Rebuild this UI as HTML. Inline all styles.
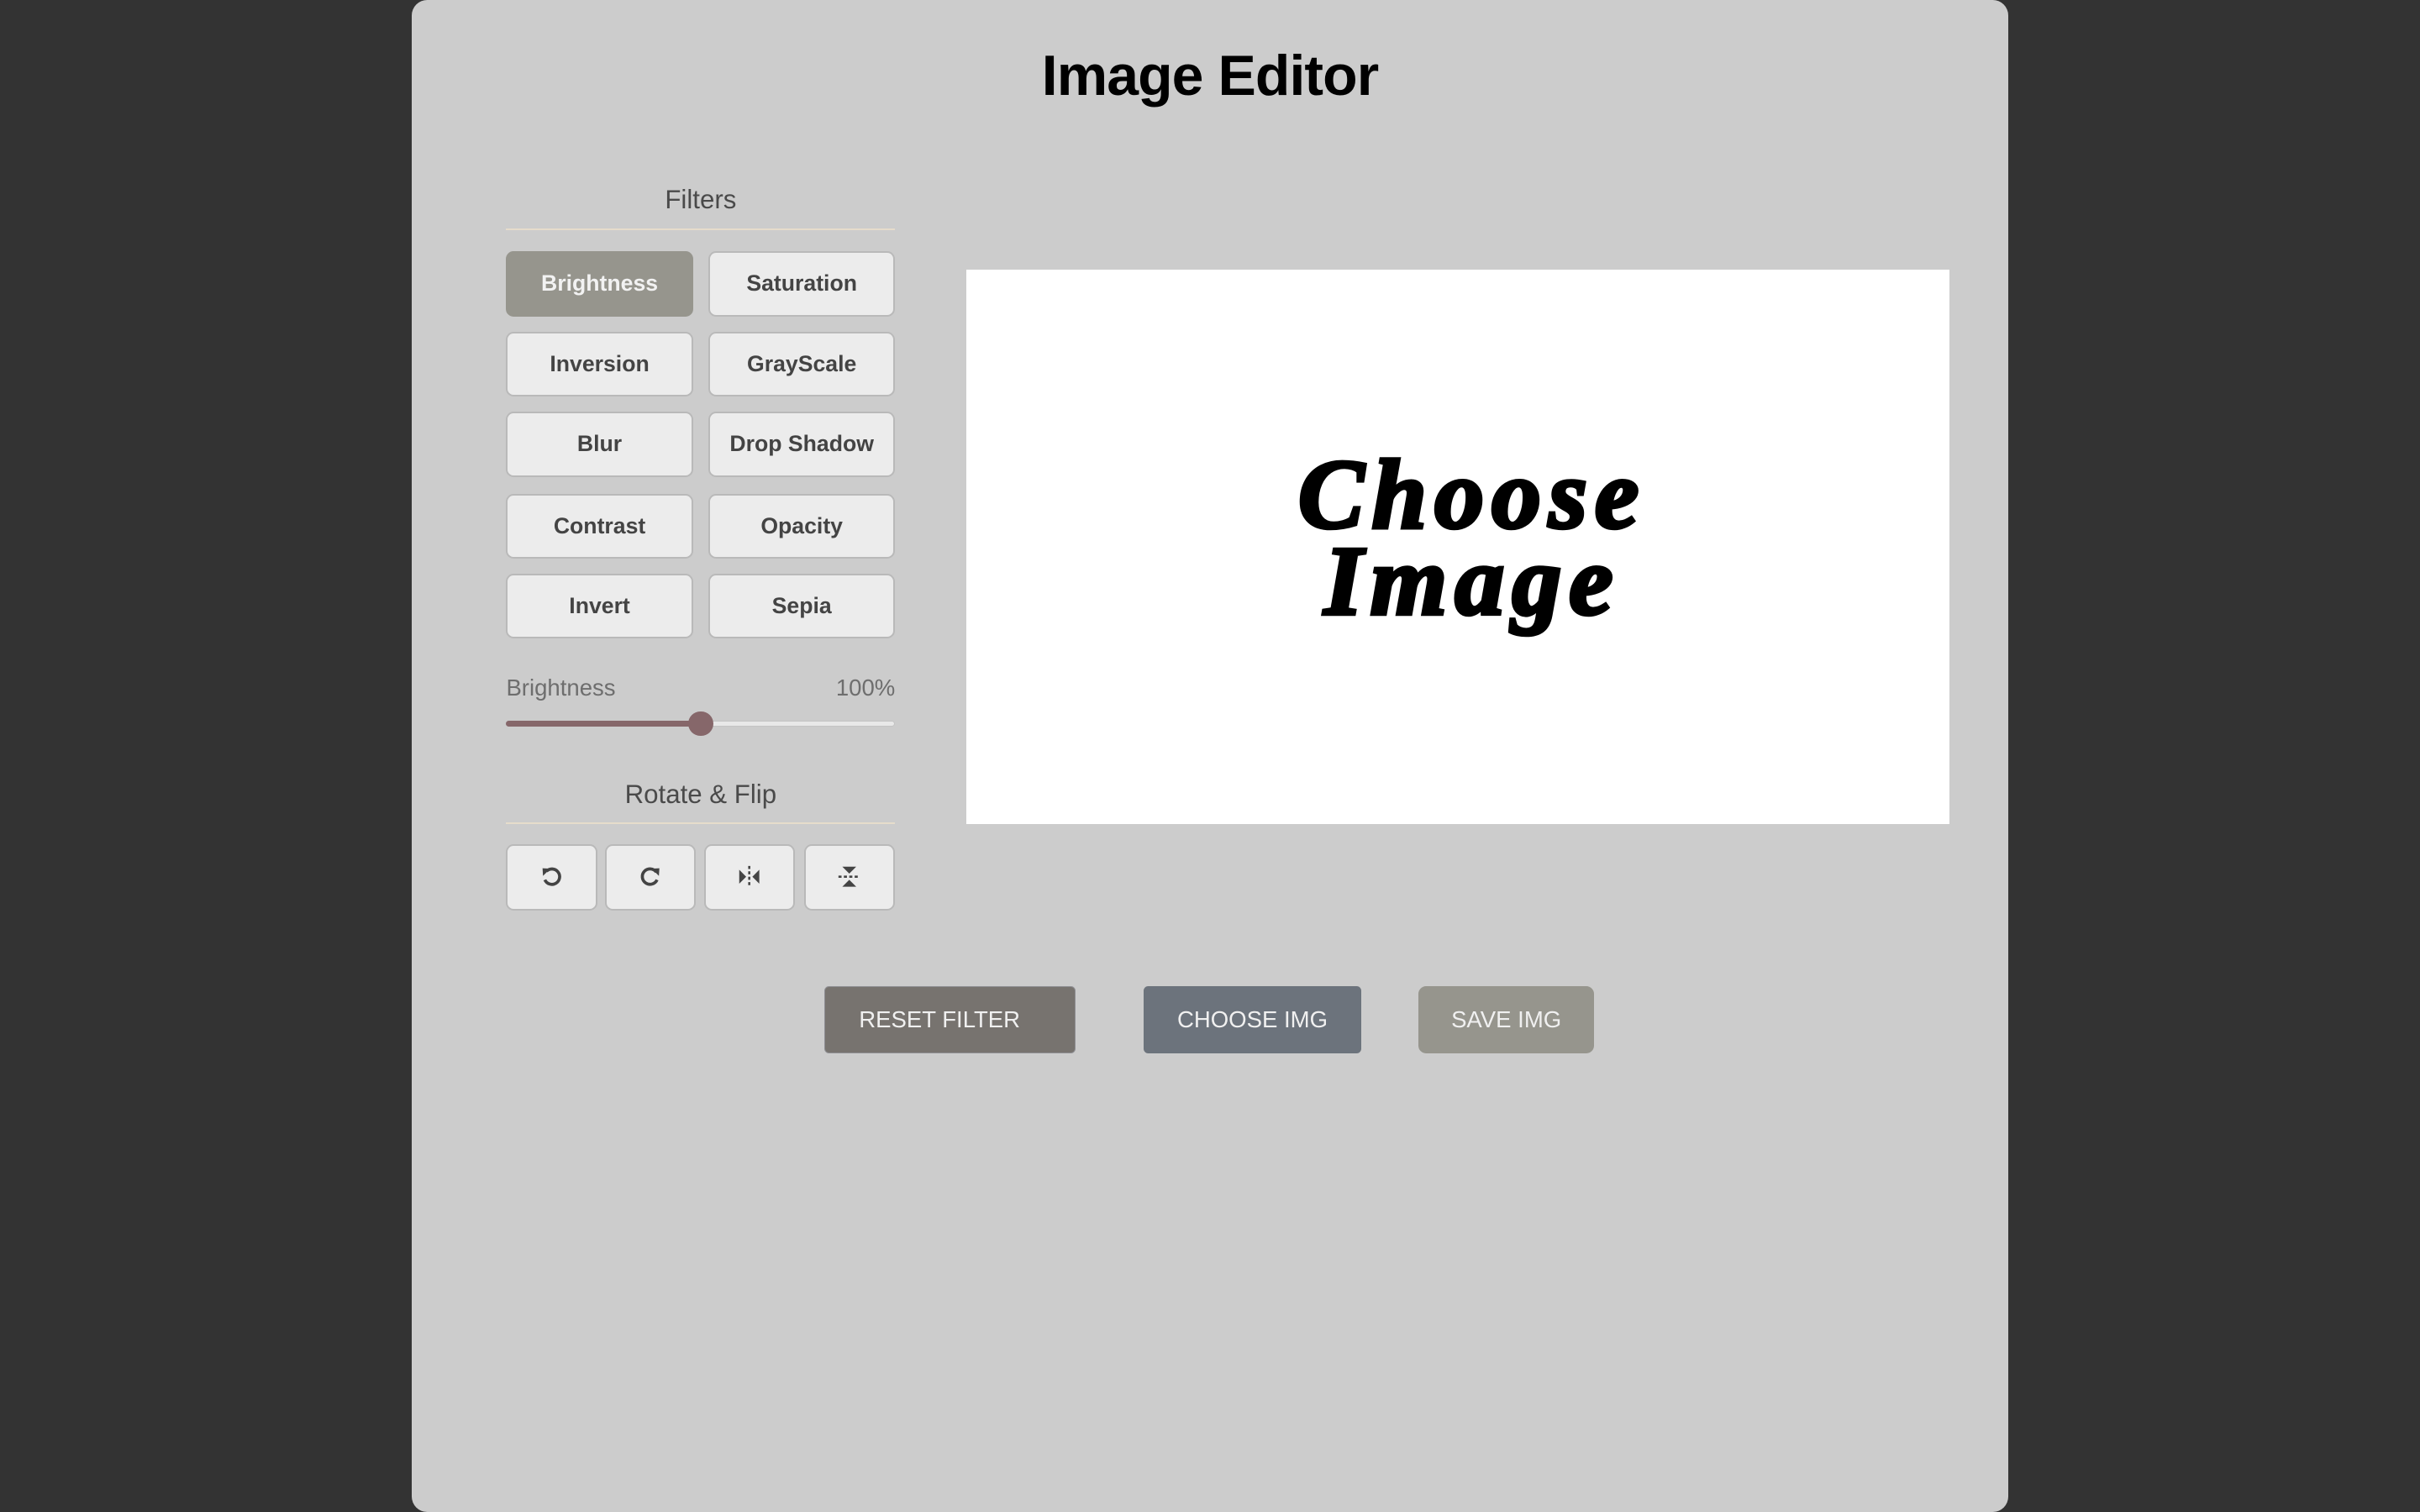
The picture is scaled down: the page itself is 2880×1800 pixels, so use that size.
<!DOCTYPE html>
<html><head><meta charset="utf-8"><style>
html,body{margin:0;padding:0;background:#333;width:2880px;height:1800px;overflow:hidden}
#z{zoom:1.836735;position:relative;width:1568px;height:980px;font-family:"Liberation Sans",sans-serif;overflow:hidden}
.c{position:absolute;left:267px;top:0;width:1034px;height:980px;background:#cccccc;border-radius:10px}
.a{position:absolute}
h1{position:absolute;left:0;width:1568px;top:28px;margin:0;text-align:center;font-size:37px;font-weight:bold;color:#000;letter-spacing:-0.5px}
.lbl{position:absolute;left:328px;width:252px;text-align:center;font-size:17px;color:#4a4a4a}
.line{position:absolute;left:328px;width:252px;height:1px;background:#e6dccb}
.b{position:absolute;width:121px;height:42px;box-sizing:border-box;border:1.5px solid #b9b9b9;border-radius:5px;background:#ececec;color:#444;font-weight:bold;font-size:14.5px;display:flex;align-items:center;justify-content:center}
.b.on{background:#96958d;border-color:#96958d;color:#f2f2f2}
.ib{position:absolute;top:547px;width:59px;height:43px;box-sizing:border-box;border:1.5px solid #b9b9b9;border-radius:5px;background:#ececec;display:flex;align-items:center;justify-content:center}
.bb{position:absolute;top:639px;height:44px;border-radius:3px;color:#f0f0f0;font-size:15px;display:flex;align-items:center;box-sizing:border-box}
</style></head><body><div id="z">
<div class="c"></div>
<h1>Image Editor</h1>
<div class="lbl" style="top:120px">Filters</div>
<div class="line" style="top:148px"></div>
<div class="b on" style="left:328px;top:163px">Brightness</div>
<div class="b" style="left:459px;top:163px">Saturation</div>
<div class="b" style="left:328px;top:215px">Inversion</div>
<div class="b" style="left:459px;top:215px">GrayScale</div>
<div class="b" style="left:328px;top:267px">Blur</div>
<div class="b" style="left:459px;top:267px">Drop Shadow</div>
<div class="b" style="left:328px;top:320px">Contrast</div>
<div class="b" style="left:459px;top:320px">Opacity</div>
<div class="b" style="left:328px;top:372px">Invert</div>
<div class="b" style="left:459px;top:372px">Sepia</div>
<div class="a" style="left:328px;top:437px;font-size:15px;color:#6e6e6e">Brightness</div>
<div class="a" style="left:500px;width:80px;text-align:right;top:437px;font-size:15px;color:#6e6e6e">100%</div>
<div class="a" style="left:328px;top:467px;width:252px;height:4px;border-radius:2px;background:#e8e8e8;border:0.5px solid #c4c4c4;box-sizing:border-box"></div>
<div class="a" style="left:328px;top:467px;width:126px;height:4px;border-radius:2px;background:#86676a"></div>
<div class="a" style="left:446px;top:461px;width:16px;height:16px;border-radius:50%;background:#86676a"></div>
<div class="lbl" style="top:505px">Rotate &amp; Flip</div>
<div class="line" style="top:533px"></div>
<div class="ib" style="left:328px"><svg width="16" height="16" viewBox="0 0 16 16"><path d="M4.5 4.5A5 5 0 1 1 3.5 10" fill="none" stroke="#444" stroke-width="2"/><path d="M2 2.5L7 2.8 2.3 7.5Z" fill="#444"/></svg></div>
<div class="ib" style="left:392px"><svg width="16" height="16" viewBox="0 0 16 16"><path d="M12 5A5 5 0 1 0 12.5 10" fill="none" stroke="#444" stroke-width="2"/><path d="M14 2.5L9 2.8 13.7 7.5Z" fill="#444"/></svg></div>
<div class="ib" style="left:456px"><svg width="16" height="16" viewBox="0 0 16 16"><path d="M1.5 3.5L6 8 1.5 12.5Z M14.5 3.5L10 8 14.5 12.5Z" fill="#444"/><path d="M8 1v14" stroke="#444" stroke-width="1.4" stroke-dasharray="2 1.5"/></svg></div>
<div class="ib" style="left:521px"><svg width="16" height="16" viewBox="0 0 16 16"><path d="M3.5 1.5L8 6 12.5 1.5Z M3.5 14.5L8 10 12.5 14.5Z" fill="#444"/><path d="M1 8h14" stroke="#444" stroke-width="1.4" stroke-dasharray="2 1.5"/></svg></div>
<div class="a" style="left:626px;top:175px;width:637px;height:359px;background:#fff;overflow:hidden">
<div class="a" style="left:0;top:118px;width:656px;text-align:center;font-family:'Liberation Serif',serif;font-weight:bold;font-style:italic;font-size:64px;line-height:56px;color:#000;letter-spacing:5px;-webkit-text-stroke:2.5px #000">Choose<br>Image</div>
</div>
<div class="bb" style="left:534px;width:163px;background:#77736f;border:1px solid #8f8f93;padding-left:22px">RESET FILTER</div>
<div class="bb" style="left:741px;width:141px;background:#6c737c;justify-content:center">CHOOSE IMG</div>
<div class="bb" style="left:919px;width:114px;background:#96958d;justify-content:center;border-radius:5px">SAVE IMG</div>
</div></body></html>
